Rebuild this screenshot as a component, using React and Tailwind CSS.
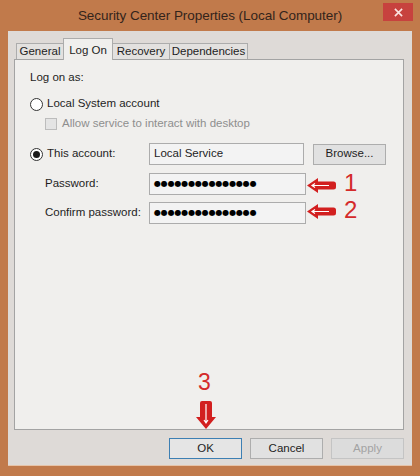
import React from "react";

const font = { fontFamily: '"Liberation Sans", Arial, sans-serif' };

function Radio({ checked }) {
    return (
        <span className="w-[13px] h-[13px] rounded-full border border-[#333] bg-white flex items-center justify-center shrink-0">
            {checked && <span className="w-[7px] h-[7px] rounded-full bg-[#1a1a1a]" />}
        </span>
    );
}

function Field({ children, w }) {
    return (
        <div className={`h-[22px] border border-[#acacac] bg-[#f3f3f3] flex items-center px-[4px] ${w}`}>
            {children}
        </div>
    );
}

function Dots() {
    return (
        <span className="text-[8px] tracking-[-0.15px] text-black leading-none" style={{ fontFamily: '"DejaVu Sans", sans-serif' }}>
            ●●●●●●●●●●●●●●●
        </span>
    );
}

function Btn({ children, className }) {
    return (
        <div className={`h-[21px] w-[73px] border flex items-center justify-center text-[11.5px] ${className}`}>
            {children}
        </div>
    );
}

function ArrowLeft({ className }) {
    return (
        <svg viewBox="0 0 29 15" className={className}>
            <path d="M0 7.5 L11 0 L11 3.5 L26.5 3.5 Q29 3.5 29 6 L29 9 Q29 11.5 26.5 11.5 L11 11.5 L11 15 Z" fill="#d21f1f" />
            <path d="M5 7.5 L22 7.5 M8 5.5 L5 7.5 L8 9.5" stroke="#fff" strokeWidth="1.2" fill="none" />
        </svg>
    );
}

function ArrowDown({ className }) {
    return (
        <svg viewBox="0 0 20 28" className={className}>
            <path d="M10 28 L0 16 L4 16 L4 2 Q4 0 6 0 L14 0 Q16 0 16 2 L16 16 L20 16 Z" fill="#d21f1f" />
            <path d="M10 3 L10 22 M8 19 L10 22 L12 19" stroke="#fff" strokeWidth="1.2" fill="none" />
        </svg>
    );
}

export default function App() {
    return (
        <div className="relative w-[420px] h-[476px] bg-[#c17a4b] flex flex-col overflow-hidden" style={font}>
            {/* title bar */}
            <div className="relative h-[31px] shrink-0 flex items-center justify-center">
                <span className="text-[13.5px] text-[#33241b] tracking-[-0.05px] mt-[1px]">Security Center Properties (Local Computer)</span>
                <div className="absolute left-[383px] top-[3px] w-[30px] h-[18px] bg-[#c7423e] flex items-center justify-center">
                    <svg viewBox="0 0 10 10" className="w-[9px] h-[9px]">
                        <path d="M1 1 L9 9 M9 1 L1 9" stroke="#fbe3e0" strokeWidth="1.8" />
                    </svg>
                </div>
            </div>

            {/* client area */}
            <div className="mx-[8px] mb-[10px] flex-1 bg-[#dedad7] flex flex-col border-b border-[#e6c3a8]">
                <div className="pt-[7px] pl-[6px] pr-[8px]">
                    {/* tabs */}
                    <div className="flex items-end h-[21px] pl-[2px] relative z-10 text-[11.5px] text-[#1e1e1e]">
                        <div className="w-[47px] h-[16px] border border-r-0 border-b-0 border-[#acacac] bg-[#e3e1df] flex items-center justify-center">General</div>
                        <div className="w-[50px] border border-b-0 border-[#acacac] bg-[#f0efed] flex items-start justify-center pt-[3px] -mb-[1px] h-[22px]">Log On</div>
                        <div className="w-[57px] h-[16px] border border-l-0 border-b-0 border-[#acacac] bg-[#e3e1df] flex items-center justify-center">Recovery</div>
                        <div className="w-[78px] h-[16px] border border-l-0 border-b-0 border-[#acacac] bg-[#e3e1df] flex items-center justify-center">Dependencies</div>
                    </div>

                    {/* panel */}
                    <div className="h-[371px] border border-[#a3a3a3] bg-[#f0efed] pl-[15px] pt-[11px] flex flex-col text-[11.5px] text-[#1e1e1e]">
                        <div className="h-[14px] flex items-center">Log on as:</div>
                        <div className="h-[16px] mt-[11px] flex items-center gap-[4px]">
                            <Radio />
                            <span>Local System account</span>
                        </div>
                        <div className="h-[12px] mt-[6px] ml-[15px] flex items-center gap-[5px]">
                            <span className="w-[12px] h-[12px] border border-[#bcbcbc] bg-[#e4e4e4]" />
                            <span className="text-[#8e8e8e]">Allow service to interact with desktop</span>
                        </div>
                        <div className="h-[22px] mt-[13px] flex items-center">
                            <div className="w-[119px] flex items-center gap-[4px]">
                                <Radio checked />
                                <span>This account:</span>
                            </div>
                            <Field w="w-[155px]">
                                <span>Local Service</span>
                            </Field>
                            <Btn className="ml-[9px] border-[#adadad] bg-[#e1e1e1]">Browse...</Btn>
                        </div>
                        <div className="h-[22px] mt-[8px] flex items-center">
                            <div className="w-[119px] pl-[15px]">Password:</div>
                            <Field w="w-[157px]">
                                <Dots />
                            </Field>
                        </div>
                        <div className="h-[22px] mt-[7px] flex items-center">
                            <div className="w-[119px] pl-[15px]">Confirm password:</div>
                            <Field w="w-[157px]">
                                <Dots />
                            </Field>
                        </div>
                    </div>

                    {/* buttons */}
                    <div className="flex justify-end gap-[8px] mt-[8px] text-[#1e1e1e]">
                        <Btn className="border-[#3d7fb3] bg-[#e5e5e5]">OK</Btn>
                        <Btn className="border-[#adadad] bg-[#e1e1e1]">Cancel</Btn>
                        <Btn className="border-[#c4c4c4] bg-[#dcdcdc] text-[#a3a3a3]">Apply</Btn>
                    </div>
                </div>
            </div>

            {/* annotations */}
            <ArrowLeft className="absolute left-[307px] top-[178px] w-[29px] h-[15px]" />
            <span className="absolute left-[344px] top-[170px] text-[24px] leading-[26px] text-[#d42a2a]">1</span>
            <ArrowLeft className="absolute left-[307px] top-[204px] w-[29px] h-[15px]" />
            <span className="absolute left-[344px] top-[197px] text-[24px] leading-[26px] text-[#d42a2a]">2</span>
            <span className="absolute left-[198px] top-[369px] text-[23px] leading-[26px] text-[#d42a2a]">3</span>
            <ArrowDown className="absolute left-[196px] top-[401px] w-[20px] h-[28px]" />
        </div>
    );
}
